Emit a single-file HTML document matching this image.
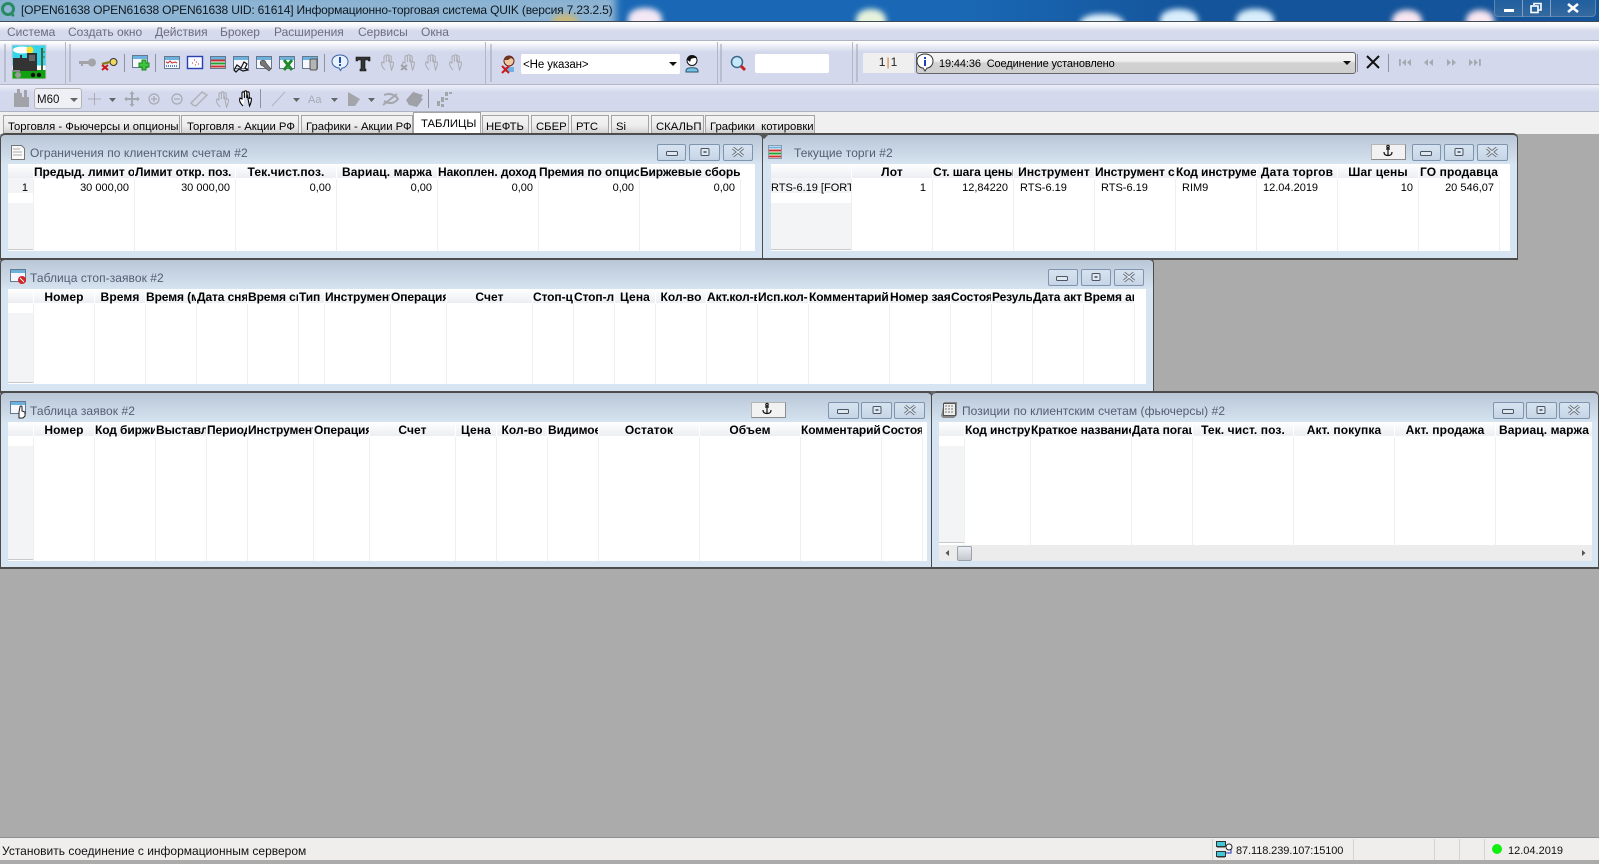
<!DOCTYPE html>
<html lang="ru"><head><meta charset="utf-8"><title>QUIK</title>
<style>
html,body{margin:0;padding:0;width:1599px;height:860px;overflow:hidden;background:#ababab;font-family:"Liberation Sans",sans-serif;font-size:12px;color:#000}
div,span,u,p,i{position:absolute;box-sizing:border-box;white-space:nowrap;text-decoration:none;font-style:normal;margin:0}
.bar{left:0;width:1599px}
.m{top:25px;line-height:15px;color:#6d6d7e}
.sep{width:1px;background:#b4b8c6}
.tab{top:115px;height:19px;border:1px solid #a4a4a4;border-bottom:0;background:linear-gradient(#f4f4f4 0,#ececec 55%,#cbcbcb 100%);line-height:23px;font-size:11.3px;overflow:hidden}
.tab span{top:0}
.w{background:linear-gradient(#b8c6d7 0,#d7e4f1 30px);border:1px solid #4c4c4c;border-width:2px 1px 2px 1px;border-radius:5px 5px 0 0}
.tt{line-height:14px;color:#545e73;letter-spacing:.06px}
.b{height:17px;border:1px solid #7f94ae;border-radius:2px;background:linear-gradient(#d7e3f0,#c6d5e6)}
.an{height:16px;border:1px solid #b5b5b5;border-right-color:#8b8b8b;border-bottom-color:#8b8b8b;background:#f2f2f2}
.t{background:#fff;display:flex;overflow:hidden}
.c{position:relative;flex:none;height:100%;border-right:1px solid #eeeff1}
.c u{left:0;right:-1px;top:0;height:15px;line-height:17px;font-weight:bold;letter-spacing:.1px;text-align:center;overflow:hidden;background:linear-gradient(#fff,#eceef2) no-repeat;background-size:100% 14px;border-right:1px solid #fff}
.c u.l{text-align:left;letter-spacing:-.1px}
.c p{left:0;right:0;top:16px;height:16px;line-height:16px;font-size:11px;padding:0 5px;text-align:right;overflow:hidden}
.c p.l{text-align:left;padding-left:6px}
.st{top:838px;height:22px;line-height:26px;font-size:12px;color:#111}
.sd{top:839px;height:21px;width:1px;background:#d6d3d3}
.gl{border-radius:45% 45% 20% 20%}
</style></head><body>

<!-- title bar -->
<div class="bar" style="top:0;height:21px;background:linear-gradient(90deg,#1a68b5 0,#1a68b5 60%,#14549a 75%,#14549a 100%);overflow:hidden">
 <div style="left:-6px;top:-6px;width:622px;height:34px;background:#8db4d2;filter:blur(4px)"></div>
 <div class="gl" style="left:628px;top:8px;width:34px;height:24px;background:#f4e8f4;filter:blur(3px)"></div>
 <div class="gl" style="left:552px;top:14px;width:26px;height:16px;background:#c8b87c;filter:blur(3px)"></div>
 <div class="gl" style="left:856px;top:9px;width:30px;height:24px;background:#e6f2dc;filter:blur(3px)"></div>
 <div class="gl" style="left:1080px;top:14px;width:44px;height:20px;background:#dff0fb;filter:blur(3px)"></div>
 <div class="gl" style="left:1160px;top:9px;width:38px;height:24px;background:#d8eefc;filter:blur(3px)"></div>
 <div class="gl" style="left:1236px;top:9px;width:38px;height:24px;background:#d8eefc;filter:blur(3px)"></div>
 <div class="gl" style="left:1392px;top:10px;width:30px;height:24px;background:#f8e6f0;filter:blur(3px)"></div>
 <div class="gl" style="left:1466px;top:10px;width:28px;height:24px;background:#f8e6f0;filter:blur(3px)"></div>
 <div style="left:21px;top:3px;line-height:15px;color:#101820;font-size:12px;letter-spacing:-.17px">[OPEN61638 OPEN61638 OPEN61638 UID: 61614] Информационно-торговая система QUIK (версия 7.23.2.5)</div>
 <div style="left:1494px;top:-2px;width:102px;height:19px;border:1px solid #5d86b0;border-radius:0 0 4px 4px;background:linear-gradient(#1f5e9f,#34699f)"></div>
 <div style="left:1522px;top:0;width:1px;height:17px;background:#7fa0c0"></div>
 <div style="left:1550px;top:0;width:1px;height:17px;background:#7fa0c0"></div>
</div>
<div class="bar" style="top:21px;height:1px;background:#3f4a55"></div>

<!-- menu -->
<div class="bar" style="top:22px;height:19px;background:linear-gradient(#fff 0,#f4f5fa 4px,#d5daec 9px,#d5daec 100%);border-bottom:1px solid #aeb3c4"></div>
<span class="m" style="left:7px">Система</span><span class="m" style="left:68px">Создать окно</span><span class="m" style="left:155px">Действия</span><span class="m" style="left:220px">Брокер</span><span class="m" style="left:274px">Расширения</span><span class="m" style="left:358px">Сервисы</span><span class="m" style="left:421px">Окна</span>

<!-- toolbars -->
<div class="bar" style="top:41px;height:44px;background:linear-gradient(#fff 0,#f5f6fb 3px,#d3d8ec 11px,#d3d8ec 100%);border-bottom:1px solid #b2b6c4"></div>
<div class="bar" style="top:85px;height:27px;background:linear-gradient(#eef0f8 0,#d4d9ed 7px,#d3d8ec 100%);border-bottom:1px solid #aeb2c0"></div>
<div class="bar" style="top:112px;height:22px;background:#f0f0f0"></div>

<div class="sep" style="left:65px;top:42px;height:42px"></div>
<div class="sep" style="left:485px;top:42px;height:42px"></div>
<div class="sep" style="left:717px;top:42px;height:42px"></div>
<div class="sep" style="left:852px;top:42px;height:42px"></div>

<div style="left:521px;top:54px;width:159px;height:20px;background:#fff;border-radius:2px;line-height:23px;padding-left:2px;font-size:11.5px;letter-spacing:-.1px">&lt;Не указан&gt;</div>
<div style="left:755px;top:54px;width:74px;height:19px;background:#fff;border-radius:2px"></div>
<div style="left:863px;top:53px;width:51px;height:20px;background:#efefef;text-align:center;line-height:18px;font-size:12px;color:#222;letter-spacing:1px">1<span style="position:static;color:#d07020">|</span>1</div>
<div style="left:916px;top:52px;width:440px;height:22px;border:1px solid #666;border-radius:3px;background:linear-gradient(#f4f4f4 0,#efefef 40%,#d2d2d2 50%,#cfcfcf 100%);line-height:22px;padding-left:22px;font-size:11px;letter-spacing:-.12px">19:44:36&nbsp; Соединение установлено</div>
<div style="left:34px;top:88px;width:48px;height:21px;border:1px solid #b5b5b5;border-radius:3px;background:#eef0f5;line-height:23px;padding-left:2px;font-size:11.5px;color:#111">M60</div>

<!-- tabs -->
<div class="tab" style="left:3px;width:177px"><span style="left:4px">Торговля - Фьючерсы и опционы</span></div>
<div class="tab" style="left:181px;width:118px"><span style="left:5px">Торговля - Акции РФ</span></div>
<div class="tab" style="left:301px;width:112px"><span style="left:4px">Графики - Акции РФ</span></div>
<div class="tab" style="left:482px;width:47px"><span style="left:3px">НЕФТЬ</span></div>
<div class="tab" style="left:531px;width:38px"><span style="left:4px">СБЕР</span></div>
<div class="tab" style="left:571px;width:38px"><span style="left:4px">РТС</span></div>
<div class="tab" style="left:611px;width:38px"><span style="left:4px">Si</span></div>
<div class="tab" style="left:651px;width:53px"><span style="left:4px">СКАЛЬП</span></div>
<div class="tab" style="left:705px;width:110px"><span style="left:4px">Графики&nbsp; котировки</span></div>
<div style="left:413px;top:112px;width:68px;height:22px;background:#fff;border:1px solid #a4a4a4;border-bottom:0;line-height:23px;padding-left:7px;font-size:11.3px">ТАБЛИЦЫ</div>

<!-- MDI -->
<div class="bar" style="top:134px;height:704px;background:#ababab"></div>

<!-- W2 -->
<div class="w" style="left:762px;top:133px;width:756px;height:127px"></div>
<span class="tt" style="left:794px;top:146px">Текущие торги #2</span>
<div class="an" style="left:1371px;top:144px;width:35px"></div>
<div class="b" style="left:1412px;top:144px;width:29px"></div><div class="b" style="left:1444px;top:144px;width:30px"></div><div class="b" style="left:1477px;top:144px;width:31px"></div>
<div class="t" style="left:771px;top:164px;width:739px;height:87px">
 <div class="c" style="width:81px;background:linear-gradient(#f3f4f6 0 29px,#fff 29px 39px,#f3f4f6 39px 85px,#c9c9c9 85px 86px,#fff 86px)"><u></u><p class="l" style="padding-left:0;padding-right:0">RTS-6.19 [FORTS]</p></div>
 <div class="c" style="width:81px"><u>Лот</u><p style="padding-right:6px">1</p></div>
 <div class="c" style="width:81px"><u class="l">Ст. шага цены</u><p>12,84220</p></div>
 <div class="c" style="width:81px"><u>Инструмент</u><p class="l">RTS-6.19</p></div>
 <div class="c" style="width:81px"><u class="l">Инструмент сокр</u><p class="l">RTS-6.19</p></div>
 <div class="c" style="width:81px"><u class="l">Код инструмента</u><p class="l">RIM9</p></div>
 <div class="c" style="width:81px"><u>Дата торгов</u><p class="l">12.04.2019</p></div>
 <div class="c" style="width:81px"><u>Шаг цены</u><p>10</p></div>
 <div class="c" style="width:81px"><u>ГО продавца</u><p>20 546,07</p></div>
</div>

<!-- W1 -->
<div class="w" style="left:0;top:133px;width:763px;height:127px"></div>
<span class="tt" style="left:30px;top:146px">Ограничения по клиентским счетам #2</span>
<div class="b" style="left:657px;top:144px;width:29px"></div><div class="b" style="left:689px;top:144px;width:31px"></div><div class="b" style="left:723px;top:144px;width:30px"></div>
<div class="t" style="left:8px;top:164px;width:747px;height:87px">
 <div class="c" style="width:26px;background:linear-gradient(#f3f4f6 0 29px,#fff 29px 39px,#f3f4f6 39px 85px,#c9c9c9 85px 86px,#fff 86px)"><u></u><p>1</p></div>
 <div class="c" style="width:101px"><u class="l">Предыд. лимит откр</u><p>30 000,00</p></div>
 <div class="c" style="width:101px"><u class="l">Лимит откр. поз.</u><p>30 000,00</p></div>
 <div class="c" style="width:101px"><u>Тек.чист.поз.</u><p>0,00</p></div>
 <div class="c" style="width:101px"><u>Вариац. маржа</u><p>0,00</p></div>
 <div class="c" style="width:101px"><u class="l">Накоплен. доход</u><p>0,00</p></div>
 <div class="c" style="width:101px"><u class="l">Премия по опционам</u><p>0,00</p></div>
 <div class="c" style="width:101px"><u class="l">Биржевые сборы</u><p>0,00</p></div>
</div>

<!-- W3 -->
<div class="w" style="left:0;top:258px;width:1154px;height:135px"></div>
<span class="tt" style="left:30px;top:271px">Таблица стоп-заявок #2</span>
<div class="b" style="left:1048px;top:269px;width:30px"></div><div class="b" style="left:1081px;top:269px;width:30px"></div><div class="b" style="left:1114px;top:269px;width:30px"></div>
<div class="t" style="left:8px;top:289px;width:1138px;height:95px">
 <div class="c" style="width:26px;background:linear-gradient(#fff 0 24px,#f3f4f6 24px 93px,#c9c9c9 93px 94px,#fff 94px)"><u></u></div>
 <div class="c" style="width:61px"><u>Номер</u></div>
 <div class="c" style="width:51px"><u>Время</u></div>
 <div class="c" style="width:51px"><u class="l">Время (мкс)</u></div>
 <div class="c" style="width:51px"><u class="l">Дата снятия</u></div>
 <div class="c" style="width:51px"><u class="l">Время снятия</u></div>
 <div class="c" style="width:26px"><u class="l">Тип</u></div>
 <div class="c" style="width:66px"><u class="l">Инструмент</u></div>
 <div class="c" style="width:56px"><u class="l">Операция</u></div>
 <div class="c" style="width:86px"><u>Счет</u></div>
 <div class="c" style="width:41px"><u class="l">Стоп-цена</u></div>
 <div class="c" style="width:41px"><u class="l">Стоп-лимит</u></div>
 <div class="c" style="width:41px"><u>Цена</u></div>
 <div class="c" style="width:51px"><u>Кол-во</u></div>
 <div class="c" style="width:51px"><u class="l">Акт.кол-во</u></div>
 <div class="c" style="width:51px"><u class="l">Исп.кол-во</u></div>
 <div class="c" style="width:81px"><u class="l">Комментарий</u></div>
 <div class="c" style="width:61px"><u class="l">Номер заявки</u></div>
 <div class="c" style="width:41px"><u class="l">Состояние</u></div>
 <div class="c" style="width:41px"><u class="l">Результат</u></div>
 <div class="c" style="width:51px"><u class="l">Дата акт</u></div>
 <div class="c" style="width:51px"><u class="l">Время акт</u></div>
</div>

<!-- W4 -->
<div class="w" style="left:0;top:391px;width:932px;height:178px"></div>
<span class="tt" style="left:30px;top:404px">Таблица заявок #2</span>
<div class="an" style="left:751px;top:402px;width:35px"></div>
<div class="b" style="left:828px;top:402px;width:31px"></div><div class="b" style="left:861px;top:402px;width:31px"></div><div class="b" style="left:894px;top:402px;width:31px"></div>
<div class="t" style="left:8px;top:422px;width:919px;height:139px">
 <div class="c" style="width:26px;background:linear-gradient(#fff 0 24px,#f3f4f6 24px 137px,#c9c9c9 137px 138px,#fff 138px)"><u></u></div>
 <div class="c" style="width:61px"><u>Номер</u></div>
 <div class="c" style="width:61px"><u class="l">Код биржи</u></div>
 <div class="c" style="width:51px"><u class="l">Выставлена</u></div>
 <div class="c" style="width:41px"><u class="l">Период</u></div>
 <div class="c" style="width:66px"><u class="l">Инструмент</u></div>
 <div class="c" style="width:56px"><u class="l">Операция</u></div>
 <div class="c" style="width:86px"><u>Счет</u></div>
 <div class="c" style="width:41px"><u>Цена</u></div>
 <div class="c" style="width:51px"><u>Кол-во</u></div>
 <div class="c" style="width:51px"><u class="l">Видимое</u></div>
 <div class="c" style="width:101px"><u>Остаток</u></div>
 <div class="c" style="width:101px"><u>Объем</u></div>
 <div class="c" style="width:81px"><u class="l">Комментарий</u></div>
 <div class="c" style="width:41px"><u class="l">Состояние</u></div>
</div>

<!-- W5 -->
<div class="w" style="left:931px;top:391px;width:668px;height:178px"></div>
<span class="tt" style="left:962px;top:404px">Позиции по клиентским счетам (фьючерсы) #2</span>
<div class="b" style="left:1493px;top:402px;width:31px"></div><div class="b" style="left:1526px;top:402px;width:31px"></div><div class="b" style="left:1559px;top:402px;width:31px"></div>
<div class="t" style="left:939px;top:422px;width:653px;height:123px">
 <div class="c" style="width:26px;background:linear-gradient(#fff 0 24px,#f3f4f6 24px 120px,#c9c9c9 120px 121px,#fff 121px)"><u></u></div>
 <div class="c" style="width:66px"><u class="l">Код инструмента</u></div>
 <div class="c" style="width:101px"><u class="l">Краткое название</u></div>
 <div class="c" style="width:61px"><u class="l">Дата погашения</u></div>
 <div class="c" style="width:101px"><u>Тек. чист. поз.</u></div>
 <div class="c" style="width:101px"><u>Акт. покупка</u></div>
 <div class="c" style="width:101px"><u>Акт. продажа</u></div>
 <div class="c" style="width:96px;border-right:0"><u>Вариац. маржа</u></div>
</div>
<div style="left:939px;top:545px;width:653px;height:16px;background:#ececec"></div>
<div style="left:957px;top:546px;width:15px;height:15px;border:1px solid #9aa2ad;border-radius:2px;background:linear-gradient(#eceef2,#c4c8cf)"></div>

<!-- status -->
<div class="bar" style="top:837px;height:1px;background:#8f8f8f"></div>
<div class="bar" style="top:838px;height:22px;background:#f0eded"></div>
<span class="st" style="left:2px">Установить соединение с информационным сервером</span>
<span class="st" style="left:1236px;font-size:11px;letter-spacing:-.1px">87.118.239.107:15100</span>
<span class="st" style="left:1508px;font-size:11px">12.04.2019</span>
<div class="sd" style="left:1212px"></div><div class="sd" style="left:1353px"></div><div class="sd" style="left:1434px"></div><div class="sd" style="left:1459px"></div><div class="sd" style="left:1484px"></div>

<!-- icons overlay -->
<svg width="1599" height="860" viewBox="0 0 1599 860" style="position:absolute;left:0;top:0" xmlns="http://www.w3.org/2000/svg">
<defs>
 <g id="tb"><rect x="-7.5" y="-6.5" width="15" height="12" fill="#f6f7fc" stroke="#66788f"/><rect x="-7" y="-6" width="14" height="3" fill="#6cb2dc"/></g>
 <path id="hand" d="M-3 7C-6 4-7 1-6-1l2 1V-6a1.2 1.2 0 0 1 2.4 0V-1M-1.6-7a1.2 1.2 0 0 1 2.4 0V-1M.8-6a1.2 1.2 0 0 1 2.4 0V0a1.1 1.1 0 0 1 2.2 0C5.4 3 4.5 5 3.5 7Z"/>
 <g id="bmin"><rect x="-5.5" y="-1.5" width="11" height="4" rx="1" fill="#dfe7f0" stroke="#4a5564"/></g>
 <g id="bmax"><rect x="-4" y="-3.5" width="8" height="7" rx="1" fill="#dfe7f0" stroke="#4a5564"/><rect x="-1.5" y="-1" width="3" height="2" fill="#6a7686"/></g>
 <g id="bcl"><path d="M-5-4L5 4M5-4L-5 4" stroke="#66707e" stroke-width="3.2"/><path d="M-5-4L5 4M5-4L-5 4" stroke="#e4ebf2" stroke-width="1.4"/></g>
 <g id="anc" fill="none" stroke="#111" stroke-width="1.2"><circle cx="0" cy="-4.5" r="1.2"/><path d="M0-3V4M-2-2H2M-4 1C-4 4-2 4.5 0 4.5S4 4 4 1"/></g>
 <g id="ddn"><path d="M-4-2H4L0 2Z" fill="#666"/></g>
</defs>

<!-- app icon -->
<g fill="none"><circle cx="8" cy="9" r="5.5" stroke="#2a8a64" stroke-width="3"/><path d="M10 13l4 3" stroke="#2a8a64" stroke-width="2.5"/></g>
<!-- main controls -->
<rect x="1504" y="9" width="10" height="3" fill="#fff"/>
<g fill="none" stroke="#fff" stroke-width="1.6"><rect x="1531" y="6" width="7" height="6.5"/><path d="M1534 5V3.5h7v6.5h-2.5"/></g>
<path d="M1568 4L1578 12M1578 4L1568 12" stroke="#fff" stroke-width="2.6"/>

<!-- grips -->
<g fill="#a9adbb"><rect x="4" y="44" width="2" height="38" opacity=".6"/><rect x="69" y="44" width="2" height="38" opacity=".6"/><rect x="490" y="44" width="2" height="38" opacity=".6"/><rect x="720" y="44" width="2" height="38" opacity=".6"/><rect x="856" y="44" width="2" height="38" opacity=".6"/></g>

<!-- train logo -->
<rect x="12" y="45" width="34" height="34" fill="#fff" stroke="#ccd" />
<rect x="12.5" y="45.5" width="33" height="20" fill="#35d4ea"/>
<ellipse cx="22" cy="50" rx="9" ry="3.5" fill="#fff"/>
<circle cx="30" cy="50" r="3.5" fill="#f6e02a"/>
<rect x="12.5" y="70" width="33" height="8.5" fill="#10a010"/>
<path d="M13 58h7v-3h2v3h5v-5h10v18H13Z" fill="#333"/>
<rect x="29" y="55" width="6" height="6" fill="#666"/>
<rect x="41" y="48" width="2" height="22" fill="#3a6a3a"/>
<path d="M41 52h4M41 57h4" stroke="#3a6a3a"/>
<circle cx="18" cy="75" r="3" fill="#999"/><circle cx="33" cy="75" r="2.2" fill="#111"/><circle cx="39" cy="75" r="2.2" fill="#111"/>
<rect x="13" y="70" width="7" height="2" fill="#888"/>

<!-- row 1 left -->
<g fill="#a4a4a8"><circle cx="92" cy="62.5" r="4"/><rect x="79" y="61" width="11" height="3"/><rect x="81" y="64" width="2" height="2"/></g>
<circle cx="113.5" cy="62" r="3.5" fill="#f0d860" stroke="#333"/><path d="M102 64L110 62" stroke="#8a7a20" stroke-width="2.2"/><path d="M102 65L108 70M108 65L102 70" stroke="#c81818" stroke-width="2"/>
<g fill="#8f939f"><rect x="124" y="54" width="1" height="18"/><rect x="155" y="54" width="1" height="18"/><rect x="324" y="54" width="1" height="18"/><rect x="260" y="89" width="1" height="19"/><rect x="428" y="89" width="1" height="19"/><rect x="1357" y="54" width="1" height="18"/><rect x="1388" y="54" width="1" height="18"/></g>

<use href="#tb" x="140" y="62"/><path d="M142 60h4v3h3v4h-3v3h-4v-3h-3v-4h3Z" fill="#3ec43e" stroke="#1b8a1b"/>
<use href="#tb" x="172" y="63"/><path d="M166 62l2 1 2-2 2 2 3-1 2 1" fill="none" stroke="#d03030"/><path d="M166 66h11" stroke="#5a86c8" stroke-width="2" stroke-dasharray="1 1"/>
<g transform="translate(195 63)"><rect x="-7.5" y="-6.5" width="15" height="12" fill="#f8fbff" stroke="#2a3fb0" stroke-width="1.4"/><path d="M-3 0h1M-1-3h1M1-1h1M3 1h1M0 2h1" stroke="#d02020"/></g>
<use href="#tb" x="218" y="63"/><g stroke-width="2"><path d="M211 60.5h14" stroke="#c83030"/><path d="M211 63.5h14" stroke="#20a030"/><path d="M211 66.5h14" stroke="#c83030"/></g>
<use href="#tb" x="241" y="63"/><path d="M234 70l3-5 4 3 3-6 3 2-2 4 3 2-5 1-4-2-3 3Z" fill="none" stroke="#111" stroke-width="1.2"/>
<use href="#tb" x="264" y="63"/><path d="M261 61a3 3 0 0 1 5 2l5 6-2 2-6-5a3 3 0 0 1-2-5Z" fill="#777" stroke="#444" stroke-width=".6"/>
<use href="#tb" x="287" y="63"/><path d="M284 60l8 10M292 60l-8 10" stroke="#1f8a2a" stroke-width="3"/>
<use href="#tb" x="310" y="63"/><rect x="310" y="59" width="7" height="11" rx="1.5" fill="#b5b5b5" stroke="#555"/>

<!-- balloon, T -->
<path d="M340 55c5 0 8 3 8 6.500s-3 6.500-6 6.500l-1.500 2.500-1.500-2.500c-4-.5-7-3-7-6.500s3-6.500 8-6.500Z" fill="#e9f2fb" stroke="#3a62a8"/><rect x="339" y="57" width="2" height="6" fill="#2050b0"/><rect x="339" y="64" width="2" height="2" fill="#2050b0"/>
<path d="M356 57h14v4h-1.500l-.5-1h-3v9h1v2h-6v-2h1v-9h-3l-.5 1H356Z" fill="#333" stroke="#111" stroke-width=".6"/>

<g fill="none" stroke="#aaaaae" stroke-width="1"><use href="#hand" x="388" y="63"/><use href="#hand" x="409" y="63"/><use href="#hand" x="432" y="63"/><use href="#hand" x="456" y="63"/></g>
<path d="M401 65l6 5M407 65l-6 5" stroke="#a0a0a4" stroke-width="2"/>

<!-- user icons -->
<g><circle cx="509" cy="61" r="5" fill="#f0c8a0" stroke="#622"/><path d="M504 60c1-5 9-5 10 0l-3-2-3 2-4 0Z" fill="#6a3a20"/><path d="M505 67h9v5h-9Z" fill="#6fb2e8"/><path d="M502 66l7 7M509 66l-7 7" stroke="#d01818" stroke-width="2"/></g>
<path d="M669 62H677L673 66Z" fill="#111"/>
<g><circle cx="692" cy="60.500" r="5" fill="#fff" stroke="#111"/><path d="M687 60c0-5 9-6 10-2-3 0-4 0-6 1l-1 3-1-1Z" fill="#111"/><path d="M686 70c1-3 11-3 12 0v2h-12Z" fill="#6fc2e8" stroke="#356"/></g>
<!-- search -->
<circle cx="737" cy="62" r="5.500" fill="#c6e8fa" stroke="#3a6a8a" stroke-width="1.5"/><path d="M741 66l4 4" stroke="#c82020" stroke-width="3"/>
<!-- info -->
<path d="M925 54c5 0 8 3 8 7s-3 7-6 7l-2 3-2-3c-3 0-6-3-6-7s3-7 8-7Z" fill="#fff" stroke="#333"/><rect x="924" y="60" width="2" height="6" fill="#2040c0"/><rect x="924" y="57" width="2" height="2" fill="#2040c0"/>
<path d="M1343 61H1351L1347 65Z" fill="#111"/>
<path d="M1367 56L1379 68M1379 56L1367 68" stroke="#111" stroke-width="2"/>
<!-- nav -->
<g fill="#a6a8b2"><rect x="1399" y="59" width="1.800" height="7"/><path d="M1406 59v7l-4-3.500ZM1411 59v7l-4-3.500Z"/><path d="M1428 59v7l-4-3.500ZM1433 59v7l-4-3.500Z"/><path d="M1447 59v7l4-3.500ZM1452 59v7l4-3.500Z"/><path d="M1469 59v7l4-3.500ZM1474 59v7l4-3.500Z"/><rect x="1479" y="59" width="1.800" height="7"/></g>

<!-- row 2 -->
<g fill="#a2a3a8"><path d="M14 107V93h3v-4h3v4h2v4h2v-7h3v7h2v10Z"/></g>
<use href="#ddn" x="74" y="100" />
<path d="M88 99H101M94.500 93V105" stroke="#ababb4"/>
<path d="M109 98H116L112.500 102Z" fill="#666"/>
<path d="M132 92V106M125 99H139" stroke="#a6a8b0" stroke-width="2"/><path d="M132 91l-2.500 3h5ZM132 107l-2.500-3h5ZM124 99l3-2.500v5ZM140 99l-3-2.500v5Z" fill="#a6a8b0"/>
<g fill="none" stroke="#a8a9b2" stroke-width="1.200"><circle cx="154" cy="99" r="5"/><path d="M151 99h6M154 96v6"/><circle cx="177" cy="99" r="5"/><path d="M174 99h6"/></g>
<path d="M193 105l-2-2 11-11 5 3-11 11Z" fill="#d4d8e8" stroke="#aeb0ba" stroke-width="1.400"/>
<g fill="none" stroke="#aaaab0"><use href="#hand" x="223" y="100"/></g>
<g fill="#fff" stroke="#000" stroke-width="1.100"><use href="#hand" x="246" y="99"/></g>
<path d="M272 106L285 92" stroke="#b2b4bc"/>
<path d="M293 98H300L296.500 102Z" fill="#666"/>
<path d="M331 98H338L334.500 102Z" fill="#666"/>
<path d="M368 98H375L371.500 102Z" fill="#666"/>
<text x="308" y="103" font-family="Liberation Sans" font-size="11" fill="#a8aab2">Aa</text>
<path d="M348 92l12 7-5 7h-7Z" fill="#a4a5aa"/>
<path d="M383 105l14-11M384 95c5-2 11-1 14 4-4 5-9 5-14 2" fill="none" stroke="#a6a7ae" stroke-width="2"/>
<path d="M406 100l7-8 10 3-2 3 2 1-6 8-8-2Z" fill="#a0a1a6"/>
<g fill="#a4a5aa"><rect x="437" y="101" width="3" height="5"/><rect x="441" y="97" width="3" height="5"/><rect x="445" y="92" width="3" height="4"/><rect x="441" y="104" width="3" height="3"/><rect x="449" y="92" width="3" height="2"/><rect x="445" y="98" width="3" height="2"/></g>

<!-- window icons -->
<path d="M11.500 145.500h10l3 3v11h-13Z" fill="#fafafa" stroke="#777"/><path d="M13 149h7M13 152h9M13 155h9" stroke="#aaa"/>
<g transform="translate(775 152)"><rect x="-6.500" y="-6.500" width="13" height="13" fill="#fff" stroke="#8a9ab0"/><path d="M-6-4.500H6" stroke="#6cb2dc" stroke-width="2"/><path d="M-6-1.500H6" stroke="#d03030" stroke-width="2"/><path d="M-6 1.500H6" stroke="#20a030" stroke-width="2"/><path d="M-6 4.500H6" stroke="#d03030" stroke-width="2"/></g>
<use href="#tb" x="18" y="276"/><circle cx="22" cy="280" r="4" fill="#d02828"/><path d="M20 278l4 4" stroke="#fff"/>
<use href="#tb" x="18" y="408"/><path d="M19 418v-6l1-5a1 1 0 0 1 2 0v4l3 1v4l-2 2Z" fill="#fff" stroke="#222"/>
<g transform="translate(949 410)"><path d="M-8 6L-5-8H8V5L5 8H-6Z" fill="#888"/><rect x="-5.500" y="-6.500" width="12" height="12" fill="#eee" stroke="#555"/><path d="M-4-4h9M-4-1h9M-4 2h9" stroke="#777" stroke-dasharray="2 1"/></g>

<!-- window buttons -->
<use href="#bmin" x="672" y="153"/><use href="#bmax" x="705" y="152"/><use href="#bcl" x="738" y="152"/>
<use href="#bmin" x="1426" y="153"/><use href="#bmax" x="1459" y="152"/><use href="#bcl" x="1492" y="152"/>
<use href="#bmin" x="1062" y="278"/><use href="#bmax" x="1096" y="277"/><use href="#bcl" x="1129" y="277"/>
<use href="#bmin" x="843" y="411"/><use href="#bmax" x="877" y="410"/><use href="#bcl" x="910" y="410"/>
<use href="#bmin" x="1508" y="411"/><use href="#bmax" x="1541" y="410"/><use href="#bcl" x="1574" y="410"/>
<use href="#anc" x="1388" y="151"/><use href="#anc" x="767" y="409"/>

<!-- window junction tips -->
<path d="M758 133h12l-6 6Z" fill="#555"/>
<path d="M929 391h8l-4 3Z" fill="#666"/>

<!-- scroll arrows -->
<path d="M949 550v6l-3.500-3Z" fill="#555"/><path d="M1582 550v6l3.500-3Z" fill="#555"/>

<!-- status icons -->
<g><rect x="1216.500" y="841.500" width="9" height="5" fill="#40c8d8" stroke="#333"/><rect x="1216.500" y="851.500" width="9" height="5" fill="#40c8d8" stroke="#333"/><path d="M1217 847h8M1217 857h8" stroke="#333"/><path d="M1226 846h5v7h-5" fill="none" stroke="#2030c0"/><circle cx="1229" cy="847" r="3" fill="#fff" stroke="#222"/></g>
<circle cx="1497" cy="849" r="5" fill="#10f010"/>
</svg>
</body></html>
